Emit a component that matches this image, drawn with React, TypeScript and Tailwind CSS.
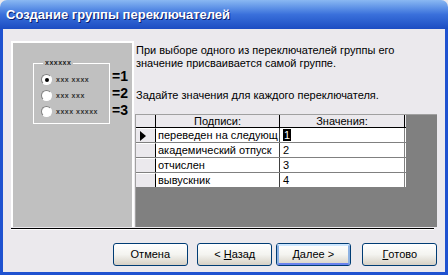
import React from "react";

const ROWS = [
  { label: "переведен на следующ", value: "1", current: true },
  { label: "академический отпуск", value: "2" },
  { label: "отчислен", value: "3" },
  { label: "вывускник", value: "4" },
];

function XpButton({ children, focused = false }: { children: React.ReactNode; focused?: boolean }) {
  return (
    <div className="w-[75px] h-[23px] rounded-[3px] border border-[#003c74] bg-gradient-to-b from-white via-[#f4f4f0] to-[#d6d0c5] flex items-center justify-center">
      <div
        className={`w-full h-full rounded-[2px] flex items-center justify-center text-[11px] text-black ${
          focused ? "border-2 border-[#8db2e3] border-t-[#cee7ff] border-b-[#6982ee]" : ""
        }`}
      >
        {children}
      </div>
    </div>
  );
}

function Radio({ checked = false }: { checked?: boolean }) {
  return (
    <div className="w-[11px] h-[11px] rounded-full border border-[#808080] border-r-white border-b-white bg-white flex items-center justify-center">
      {checked && <div className="w-[4px] h-[4px] rounded-full bg-black" />}
    </div>
  );
}

export default function App() {
  return (
    <div className="w-[448px] h-[275px] flex flex-col font-['Liberation_Sans',Arial,sans-serif] overflow-hidden bg-[#ebe9ed]">
      {/* title bar */}
      <div className="h-[29px] shrink-0 rounded-t-[7px] bg-gradient-to-b from-[#8ab8f2] via-[#3a70db] to-[#1c4cc2] flex items-center pl-[6px]">
        <span className="text-white font-bold text-[13px] [text-shadow:1px_1px_0_#0a1e6e]">
          Создание группы переключателей
        </span>
      </div>

      {/* body */}
      <div className="flex-1 flex flex-col border-x-[3px] border-b-[3px] border-[#1f52d0] pt-[12px] px-[8px]">
        <div className="flex h-[186px] gap-[1px]">
          {/* left picture panel */}
          <div className="w-[123px] shrink-0 bg-[#c0c0c0] border-l-2 border-t-2 border-r-2 border-white pt-[19px] pl-[20px]">
            <div className="flex items-start">
              <div className="relative w-[77px] h-[61px] border border-white mt-[1px]">
                <span className="absolute -top-[6px] left-[9px] bg-[#c0c0c0] px-[2px] text-[7px] leading-[9px] tracking-[0.5px] text-[#222] font-bold">
                  xxxxxx
                </span>
                <div className="flex flex-col gap-[5px] pt-[10px] pl-[7px]">
                  <div className="flex items-center gap-[4px]">
                    <Radio checked />
                    <span className="text-[7px] leading-[11px] font-bold text-[#333] tracking-[0.5px]">xxx xxxx</span>
                  </div>
                  <div className="flex items-center gap-[4px]">
                    <Radio />
                    <span className="text-[7px] leading-[11px] font-bold text-[#333] tracking-[0.5px]">xxx xxx</span>
                  </div>
                  <div className="flex items-center gap-[4px]">
                    <Radio />
                    <span className="text-[7px] leading-[11px] font-bold text-[#333] tracking-[0.5px]">xxxx xxxxx</span>
                  </div>
                </div>
              </div>
              <div className="flex flex-col pt-[6px] pl-[2px] gap-[1px]">
                <span className="text-[14px] leading-[16px] font-bold text-black">=1</span>
                <span className="text-[14px] leading-[16px] font-bold text-black">=2</span>
                <span className="text-[14px] leading-[16px] font-bold text-black">=3</span>
              </div>
            </div>
          </div>

          {/* right column */}
          <div className="flex-1 flex flex-col">
            <p className="text-[11px] leading-[13px] text-black pt-[3px] pl-[1px]">
              При выборе одного из переключателей группы его
              <br />
              значение присваивается самой группе.
            </p>
            <p className="text-[11px] leading-[13px] text-black mt-[19px] pl-[1px]">
              Задайте значения для каждого переключателя.
            </p>
            <div className="mt-[12px] flex-1 bg-[#808080] border-l border-t border-[#a0a0a0]">
              <div className="w-[270px] bg-white">
                {/* header */}
                <div className="flex h-[13px] bg-[#ebe9ed] border-b border-black">
                  <div className="w-[20px] border-r border-black" />
                  <div className="w-[124px] border-r border-black text-[11px] leading-[12px] text-center">Подписи:</div>
                  <div className="w-[125px] border-r border-black text-[11px] leading-[12px] text-center">Значения:</div>
                </div>
                {ROWS.map((r) => (
                  <div key={r.value} className="flex h-[15px] border-b border-[#808080]">
                    <div className="w-[20px] bg-[#ebe9ed] border-r border-black border-t border-t-white flex items-center pl-[4px]">
                      {r.current && (
                        <svg width="7" height="10" viewBox="0 0 7 10">
                          <path d="M0 0 L6 5 L0 10 Z" fill="#000" />
                        </svg>
                      )}
                    </div>
                    <div className="w-[124px] border-r border-[#404040] text-[11px] leading-[14px] pl-[2px] whitespace-nowrap overflow-hidden">
                      {r.label}
                    </div>
                    <div className="w-[125px] border-r border-[#808080] text-[11px] leading-[14px] pl-[3px]">
                      {r.current ? <span className="bg-black text-white px-[1px]">{r.value}</span> : r.value}
                    </div>
                  </div>
                ))}
              </div>
            </div>
          </div>
        </div>

        {/* separator */}
        <div className="h-[2px] border-t border-black border-b border-b-white mt-[1px] mr-[3px]" />

        {/* buttons */}
        <div className="flex pt-[13px] pl-[102px]">
          <XpButton>Отмена</XpButton>
          <div className="w-[10px]" />
          <XpButton>
            &lt;&nbsp;<span className="underline">Н</span>азад
          </XpButton>
          <div className="w-[4px]" />
          <XpButton focused>
            <span className="underline">Д</span>алее&nbsp;&gt;
          </XpButton>
          <div className="w-[12px]" />
          <XpButton>
            <span className="underline">Г</span>отово
          </XpButton>
        </div>
      </div>
    </div>
  );
}
